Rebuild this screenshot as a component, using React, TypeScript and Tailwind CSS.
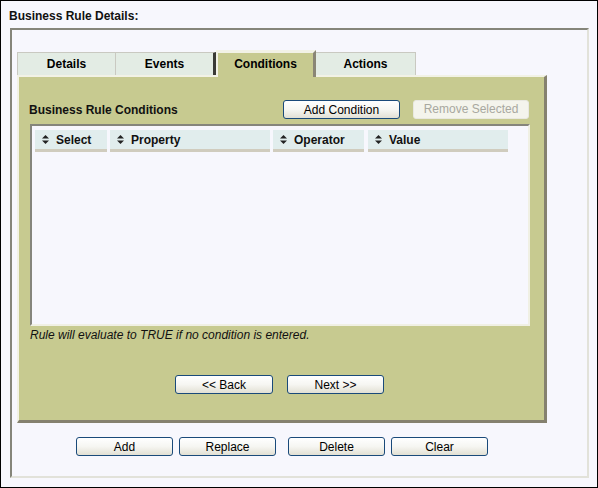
import React from "react";

const Sort = () => (
  <svg width="7" height="9" viewBox="0 0 7 9" className="shrink-0">
    <path d="M3.5 0 L7 3.5 L0 3.5 Z" fill="#222" />
    <path d="M0 5.5 L7 5.5 L3.5 9 Z" fill="#222" />
  </svg>
);

const Btn = ({ label, w }: { label: string; w: string }) => (
  <button
    className={`${w} h-[19px] rounded-[3px] border border-[#1a4a7a] bg-gradient-to-b from-white via-[#f6f6f2] to-[#e2e0d4] text-[12px] leading-[16px] text-black`}
  >
    {label}
  </button>
);

const Head = ({ label, w }: { label: string; w: string }) => (
  <div
    className={`${w} h-[22px] flex items-center gap-[7px] pl-[7px] bg-[#e1eded] border-b-[3px] border-[#d0ccbe] font-bold text-[12px] text-[#111]`}
  >
    <Sort />
    <span>{label}</span>
  </div>
);

export default function App() {
  return (
    <div
      className="w-[598px] h-[488px] border border-black bg-[#f7f7fd] text-[12px] text-black"
      style={{ fontFamily: '"Liberation Sans", Arial, sans-serif' }}
    >
      <div className="h-[27px] pl-[8px] pt-[8px] leading-[14px] font-bold text-[#111]">Business Rule Details:</div>
      <div className="ml-[9px] w-[579px] h-[450px] border-t-2 border-l-2 border-t-[#85857a] border-l-[#85857a] border-b-2 border-r-2 border-b-[#e2e2da] border-r-[#e2e2da]">
        <div className="pt-[18px] pl-[5px] flex items-end h-[45px] relative z-10">
          <div className="w-[99px] h-[23px] flex items-center justify-center bg-[#e3ece4] border border-b-0 border-[#c9c9c1] font-bold">
            Details
          </div>
          <div className="w-[100px] h-[23px] flex items-center justify-center bg-[#e3ece4] border-t border-[#c9c9c1] border-r-[3px] border-r-[#3a3a36] font-bold">
            Events
          </div>
          <div className="w-[100px] h-[27px] -mb-[2px] pb-[2px] flex items-center justify-center bg-[#c7ca90] border-t-[3px] border-l-[2px] border-t-[#f2f2e6] border-l-[#f2f2e6] border-r-[3px] border-r-[#8a8676] font-bold">
            Conditions
          </div>
          <div className="w-[100px] h-[23px] flex items-center justify-center bg-[#e3ece4] border border-b-0 border-l-0 border-[#c9c9c1] font-bold">
            Actions
          </div>
        </div>
        <div className="ml-[5px] w-[530px] h-[348px] bg-[#c7ca90] border-t-2 border-l-2 border-t-[#f2f2e6] border-l-[#f2f2e6] border-r-[3px] border-b-[3px] border-r-[#85816f] border-b-[#85816f]">
          <div className="mt-[23px] flex items-center h-[19px] pl-[10px] pr-[15px]">
            <div className="flex-1 font-bold text-[#111]">Business Rule Conditions</div>
            <Btn label="Add Condition" w="w-[117px]" />
            <div className="ml-[13px] w-[116px] h-[19px] rounded-[3px] border border-[#e8e8e0] bg-[#f4f4ec] text-[#a8a8a0] text-center leading-[17px]">
              Remove Selected
            </div>
          </div>
          <div className="mt-[5px] ml-[11px] w-[500px] h-[202px] bg-[#f7f7fd] border-t-2 border-l-2 border-t-[#85857c] border-l-[#85857c] border-b-2 border-r-2 border-b-[#f0f0e4] border-r-[#f0f0e4] pt-[4px] pl-[3px]">
            <div className="flex">
              <Head label="Select" w="w-[72px]" />
              <div className="w-[3px]" />
              <Head label="Property" w="w-[160px]" />
              <div className="w-[3px]" />
              <Head label="Operator" w="w-[91px]" />
              <div className="w-[4px]" />
              <Head label="Value" w="w-[140px]" />
            </div>
          </div>
          <div className="mt-[2px] pl-[11px] italic leading-[14px] text-[#111]">
            Rule will evaluate to TRUE if no condition is entered.
          </div>
          <div className="mt-[33px] pl-[156px] flex gap-[14px]">
            <Btn label="<< Back" w="w-[98px]" />
            <Btn label="Next >>" w="w-[97px]" />
          </div>
        </div>
        <div className="mt-[14px] ml-[64px] flex">
          <Btn label="Add" w="w-[97px]" />
          <div className="w-[6px]" />
          <Btn label="Replace" w="w-[97px]" />
          <div className="w-[12px]" />
          <Btn label="Delete" w="w-[97px]" />
          <div className="w-[6px]" />
          <Btn label="Clear" w="w-[97px]" />
        </div>
      </div>
    </div>
  );
}
